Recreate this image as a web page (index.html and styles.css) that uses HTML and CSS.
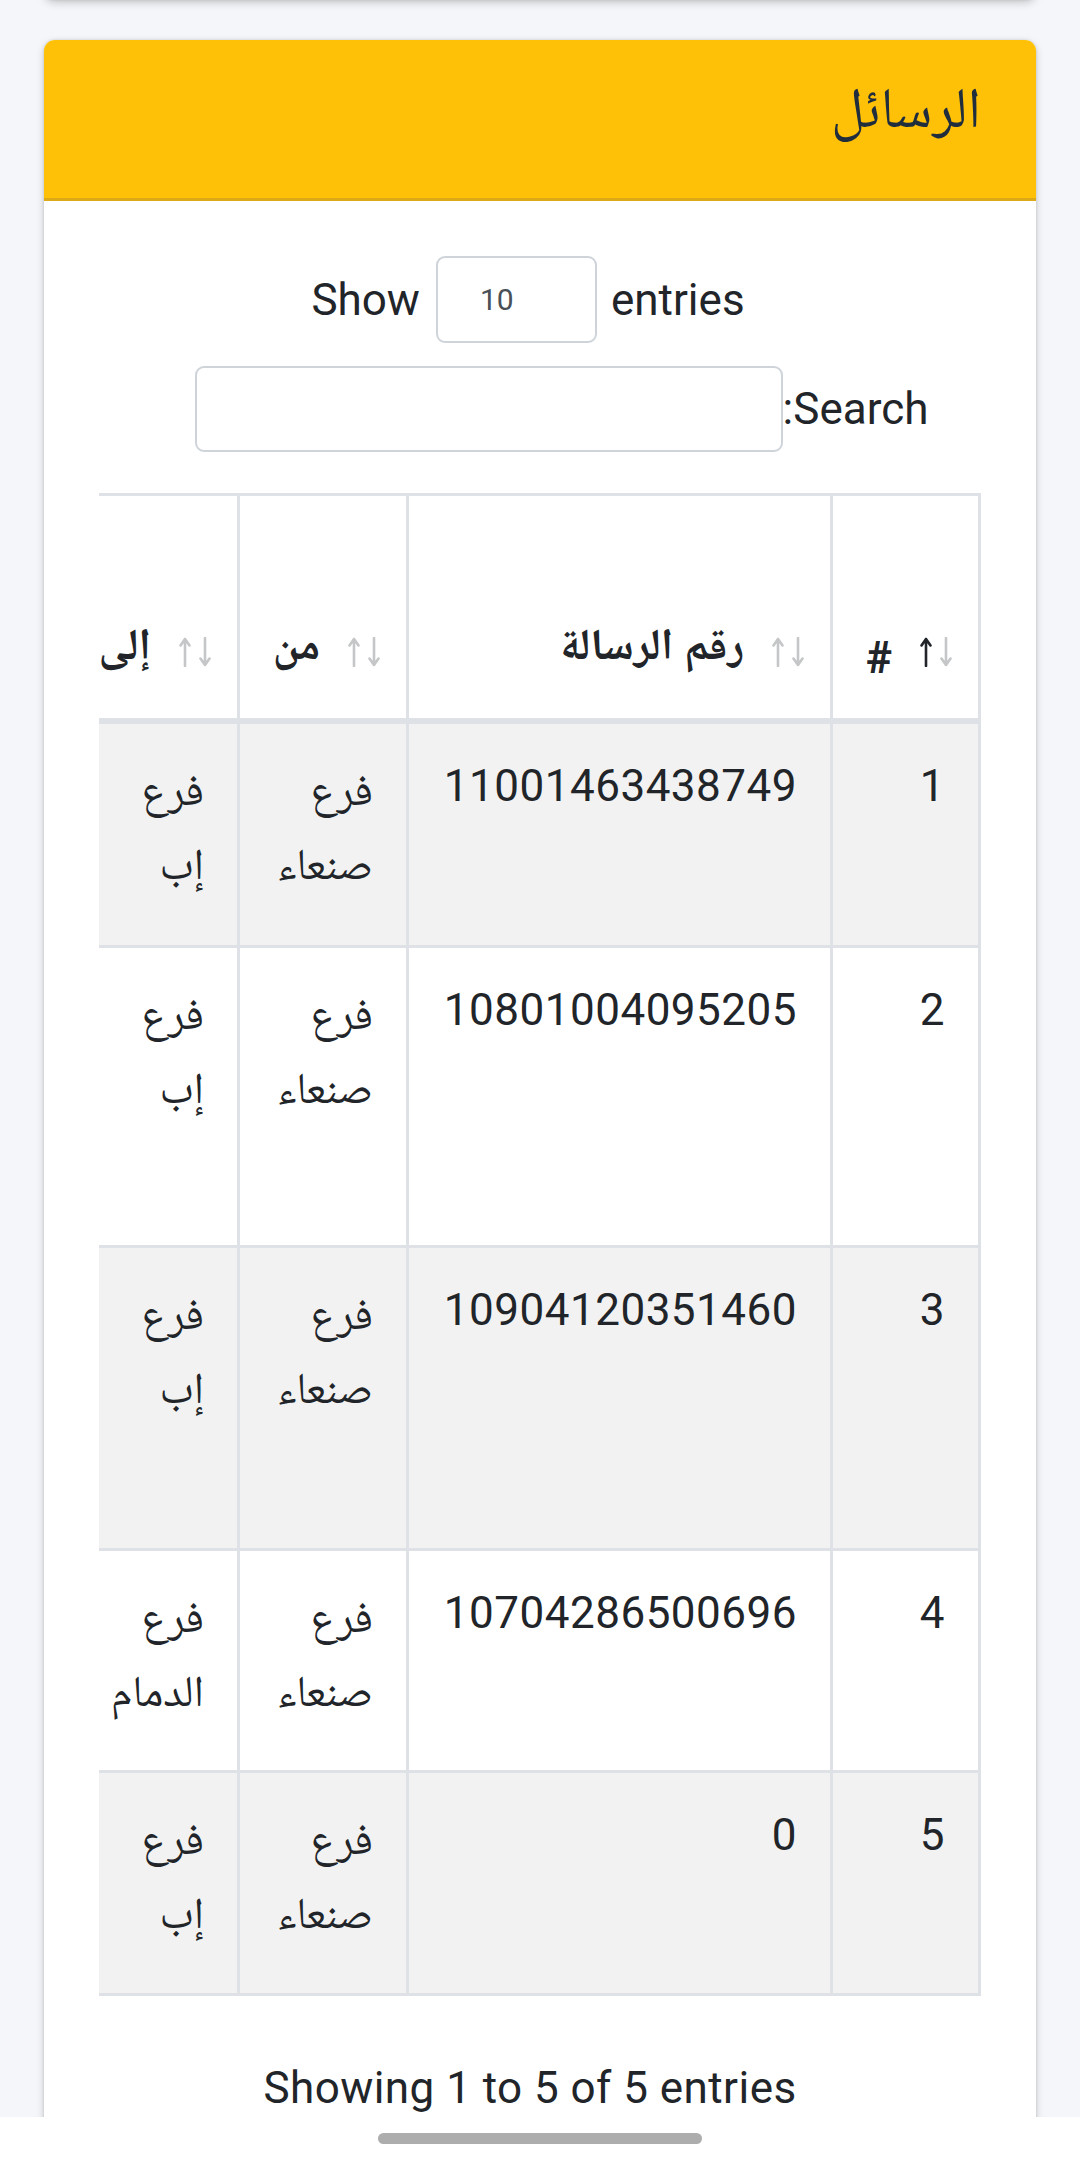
FILE: index.html
```html
<!DOCTYPE html>
<html lang="ar" dir="rtl">
<head>
<meta charset="utf-8">
<title>الرسائل</title>
<link rel="stylesheet" href="styles.css">
</head>
<body>
<div class="prev-card"></div>
<div class="card">
  <div class="card-header">
    <h3 class="card-title">الرسائل</h3>
  </div>
  <div class="card-body">
    <div class="dt-length">
      <span>Show</span>
      <select class="dt-select"><option>10</option></select>
      <span>entries</span>
    </div>
    <div class="dt-filter">
      <span>Search:</span>
      <input class="dt-input" type="search" aria-label="Search">
    </div>
    <div class="table-wrap">
      <table class="dt">
        <colgroup>
          <col class="c-num">
          <col class="c-msg">
          <col class="c-from">
          <col class="c-to">
        </colgroup>
        <thead>
          <tr>
            <th><div class="th-in"><span class="sort"><svg class="arr on" viewBox="0 0 12 30"><path d="M6 29V2M1.5 8.5L6 2l4.5 6.5"/></svg><svg class="arr" viewBox="0 0 12 30"><path d="M6 1v27M1.5 21.5L6 28l4.5-6.5"/></svg></span><span class="lbl">#</span></div></th>
            <th><div class="th-in"><span class="sort"><svg class="arr" viewBox="0 0 12 30"><path d="M6 29V2M1.5 8.5L6 2l4.5 6.5"/></svg><svg class="arr" viewBox="0 0 12 30"><path d="M6 1v27M1.5 21.5L6 28l4.5-6.5"/></svg></span><span class="lbl lbl-ar">رقم الرسالة</span></div></th>
            <th><div class="th-in"><span class="sort"><svg class="arr" viewBox="0 0 12 30"><path d="M6 29V2M1.5 8.5L6 2l4.5 6.5"/></svg><svg class="arr" viewBox="0 0 12 30"><path d="M6 1v27M1.5 21.5L6 28l4.5-6.5"/></svg></span><span class="lbl lbl-ar">من</span></div></th>
            <th><div class="th-in"><span class="sort"><svg class="arr" viewBox="0 0 12 30"><path d="M6 29V2M1.5 8.5L6 2l4.5 6.5"/></svg><svg class="arr" viewBox="0 0 12 30"><path d="M6 1v27M1.5 21.5L6 28l4.5-6.5"/></svg></span><span class="lbl lbl-ar">إلى</span></div></th>
          </tr>
        </thead>
        <tbody>
          <tr class="r1"><td class="num">1</td><td class="num">11001463438749</td><td class="ar">فرع صنعاء</td><td class="ar">فرع إب</td></tr>
          <tr class="r2"><td class="num">2</td><td class="num">10801004095205</td><td class="ar">فرع صنعاء</td><td class="ar">فرع إب</td></tr>
          <tr class="r3"><td class="num">3</td><td class="num">10904120351460</td><td class="ar">فرع صنعاء</td><td class="ar">فرع إب</td></tr>
          <tr class="r4"><td class="num">4</td><td class="num">10704286500696</td><td class="ar">فرع صنعاء</td><td class="ar">فرع الدمام</td></tr>
          <tr class="r5"><td class="num">5</td><td class="num">0</td><td class="ar">فرع صنعاء</td><td class="ar">فرع إب</td></tr>
        </tbody>
      </table>
    </div>
    <div class="dt-info">Showing 1 to 5 of 5 entries</div>
  </div>
</div>
<div class="nav-bar"><span class="nav-pill"></span></div>
</body>
</html>
```

FILE: styles.css
```css
* { box-sizing: border-box; }
html, body { margin: 0; padding: 0; }
body {
  background: #f4f6f9;
  font-family: Roboto, "Noto Naskh Arabic", "Noto Sans Arabic", "DejaVu Sans", sans-serif;
  font-size: 44px;
  line-height: 1.5;
  color: #212529;
  direction: rtl;
}
.prev-card {
  margin: -12px 44px 0;
  height: 12px;
  background: #fff;
  border-radius: 0 0 10px 10px;
  box-shadow: 0 0 3px rgba(0,0,0,.125), 0 3px 8px rgba(0,0,0,.18);
}
.card {
  margin: 40px 44px 0;
  background: #fff;
  border-radius: 11px;
  box-shadow: 0 0 3px rgba(0,0,0,.125), 0 3px 8px rgba(0,0,0,.18);
}
.card-header {
  background: #ffc107;
  border-bottom: 3px solid #dcaa16;
  border-radius: 11px 11px 0 0;
  height: 161px;
  padding: 32px 55px 0;
}
.card-title {
  margin: 0;
  font-size: 57px;
  font-weight: 400;
  line-height: 72px;
  color: #1f2d3d;
}
.card-body {
  padding: 55px 55px 200px;
}
.dt-length {
  display: flex;
  justify-content: center;
  align-items: center;
  direction: ltr;
  height: 87px;
  padding-right: 24px;
}
.dt-select {
  -webkit-appearance: none;
  appearance: none;
  width: 161px;
  height: 87px;
  margin: 0 14px 0 16px;
  padding: 0 0 0 42px;
  border: 2px solid #ced4da;
  border-radius: 9px;
  background: #fff;
  font-family: Roboto, sans-serif;
  font-size: 30px;
  color: #495057;
}
.dt-filter {
  display: flex;
  justify-content: center;
  align-items: center;
  margin-top: 23px;
  height: 86px;
  padding-left: 43px;
}
.dt-input {
  width: 588px;
  height: 86px;
  border: 2px solid #ced4da;
  border-radius: 9px;
  background: #fff;
  margin: 0;
}
.table-wrap {
  margin-top: 41px;
  overflow: hidden;
  direction: rtl;
}
.dt {
  border-collapse: collapse;
  table-layout: fixed;
  width: 920px;
  border: 3px solid #dee2e6;
}
.c-num { width: 148px; }
.c-msg { width: 424px; }
.c-from { width: 169px; }
.c-to { width: 179px; }
.dt th, .dt td {
  border: 3px solid #dee2e6;
  text-align: right;
}
.dt th {
  vertical-align: bottom;
  font-weight: 700;
  padding: 33px 26px 27px 33px;
  border-bottom-width: 6px;
}
.dt thead tr { height: 226px; }
.th-in {
  display: flex;
  align-items: flex-end;
}
.sort {
  display: flex;
  direction: ltr;
  align-items: flex-end;
  gap: 8px;
  margin-left: 28px;
  margin-bottom: 24px;
  flex: none;
}
.arr {
  width: 12px;
  height: 30px;
  fill: none;
  stroke: #c4c6c8;
  stroke-width: 2.6;
  stroke-linecap: round;
  stroke-linejoin: round;
}
.arr.on { stroke: #212529; }
.lbl { white-space: nowrap; }
.lbl-ar { margin-bottom: 14px; }
.dt td {
  vertical-align: top;
  padding: 33px;
}
.dt td.num {
  padding-top: 29px;
  letter-spacing: 0.5px;
}
.dt td.ar {
  line-height: 74px;
  padding-top: 29px;
}
.dt tbody tr:nth-child(odd) { background: #f2f2f2; }
.r1 { height: 226px; }
.r2 { height: 300px; }
.r3 { height: 303px; }
.r4 { height: 222px; }
.r5 { height: 223px; }
.dt-info {
  margin-top: 59px;
  padding-right: 20px;
  text-align: center;
  direction: ltr;
  letter-spacing: 0.45px;
}
.nav-bar {
  position: fixed;
  left: 0;
  right: 0;
  bottom: 0;
  height: 42px;
  background: #fff;
  display: flex;
  justify-content: center;
  padding-top: 16px;
}
.nav-pill {
  width: 324px;
  height: 11px;
  border-radius: 6px;
  background: #adadad;
}
```
